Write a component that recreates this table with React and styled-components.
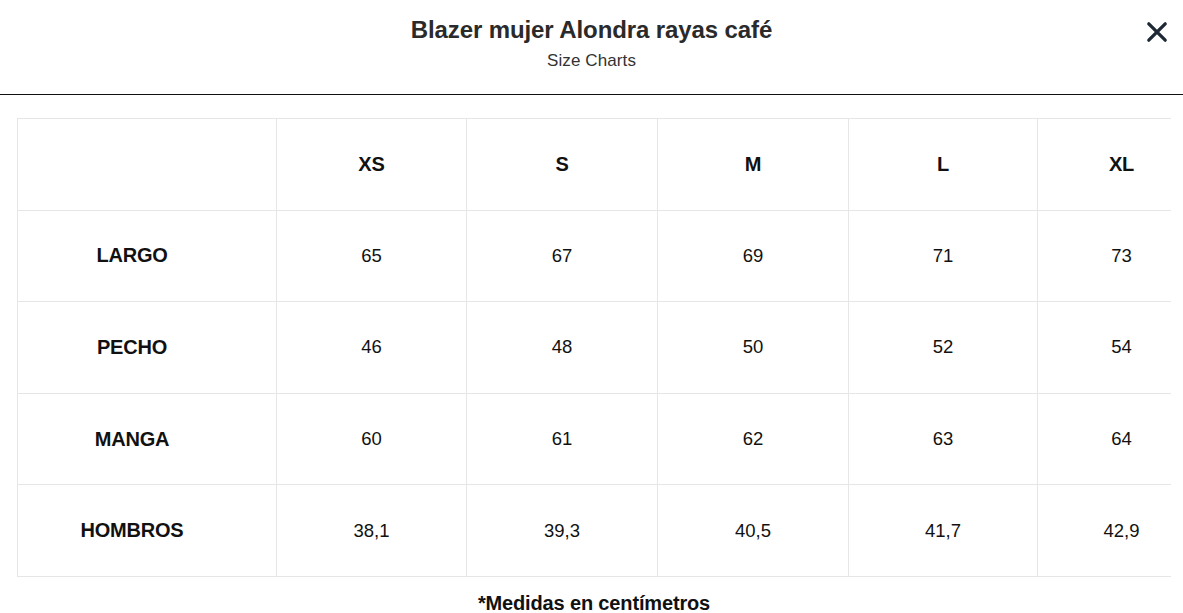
import React from 'react';
import styled, { createGlobalStyle } from 'styled-components';

const GlobalStyle = createGlobalStyle`
  body {
    margin: 0;
    background: #fff;
    font-family: "Liberation Sans", Arial, sans-serif;
    color: #111;
  }
`;

const Modal = styled.div`
  width: 1183px;
  height: 613px;
  overflow: hidden;
  background: #fff;
`;

const Header = styled.header`
  position: relative;
  height: 95px;
  border-bottom: 1px solid #111;
  display: flex;
  flex-direction: column;
  align-items: center;
  padding-top: 15px;
  box-sizing: border-box;
`;

const Title = styled.h2`
  margin: 0;
  font-size: 24px;
  font-weight: 700;
  letter-spacing: -0.1px;
  color: #2a2a2a;
  line-height: 30px;
`;

const Subtitle = styled.div`
  margin-top: 6px;
  font-size: 17px;
  line-height: 20px;
  color: #333;
  letter-spacing: 0.1px;
`;

const CloseButton = styled.button`
  position: absolute;
  top: 20px;
  right: 14px;
  width: 24px;
  height: 24px;
  padding: 0;
  border: 0;
  background: none;
  cursor: pointer;
  color: #1f2933;
`;

const Body = styled.div`
  padding: 23px 12px 0 17px;
`;

const TableScroll = styled.div`
  overflow: hidden;
`;

const Table = styled.table`
  border-collapse: collapse;
  table-layout: fixed;
  width: 1188px;
`;

const Cell = styled.td`
  height: 90.6px;
  border: 1px solid #e6e6e6;
  text-align: center;
  font-size: ${(p) => (p.$bold ? '20px' : '18.5px')};
  font-weight: ${(p) => (p.$bold ? 700 : 400)};
  letter-spacing: ${(p) => (p.$bold ? '-0.2px' : '0')};
  padding: ${(p) => (p.$label ? '0 30px 0 0' : '0')};
  color: #111;
`;

const Note = styled.p`
  margin: 15px 0 0;
  text-align: center;
  font-size: 20px;
  line-height: 23px;
  font-weight: 700;
  letter-spacing: -0.15px;
  color: #111;
`;

const sizes = ['XS', 'S', 'M', 'L', 'XL'];
const widths = [259, 190, 191, 191, 189, 168];
const rows = [
  ['LARGO', '65', '67', '69', '71', '73'],
  ['PECHO', '46', '48', '50', '52', '54'],
  ['MANGA', '60', '61', '62', '63', '64'],
  ['HOMBROS', '38,1', '39,3', '40,5', '41,7', '42,9'],
];

export default function App() {
  return (
    <Modal>
      <GlobalStyle />
      <Header>
        <Title>Blazer mujer Alondra rayas café</Title>
        <Subtitle>Size Charts</Subtitle>
        <CloseButton aria-label="Cerrar">
          <svg width="24" height="24" viewBox="0 0 24 24" fill="none" stroke="currentColor" strokeWidth="3.3" strokeLinecap="round">
            <path d="M3.8 3.8L20.2 20.2M20.2 3.8L3.8 20.2" />
          </svg>
        </CloseButton>
      </Header>
      <Body>
        <TableScroll>
          <Table>
            <colgroup>
              {widths.map((w, i) => (
                <col key={i} style={{ width: w }} />
              ))}
            </colgroup>
            <tbody>
              <tr>
                <Cell $label />
                {sizes.map((s) => (
                  <Cell key={s} $bold>{s}</Cell>
                ))}
              </tr>
              {rows.map(([label, ...vals]) => (
                <tr key={label}>
                  <Cell $label $bold>{label}</Cell>
                  {vals.map((v, i) => (
                    <Cell key={i}>{v}</Cell>
                  ))}
                </tr>
              ))}
            </tbody>
          </Table>
        </TableScroll>
        <Note>*Medidas en centímetros</Note>
      </Body>
    </Modal>
  );
}
